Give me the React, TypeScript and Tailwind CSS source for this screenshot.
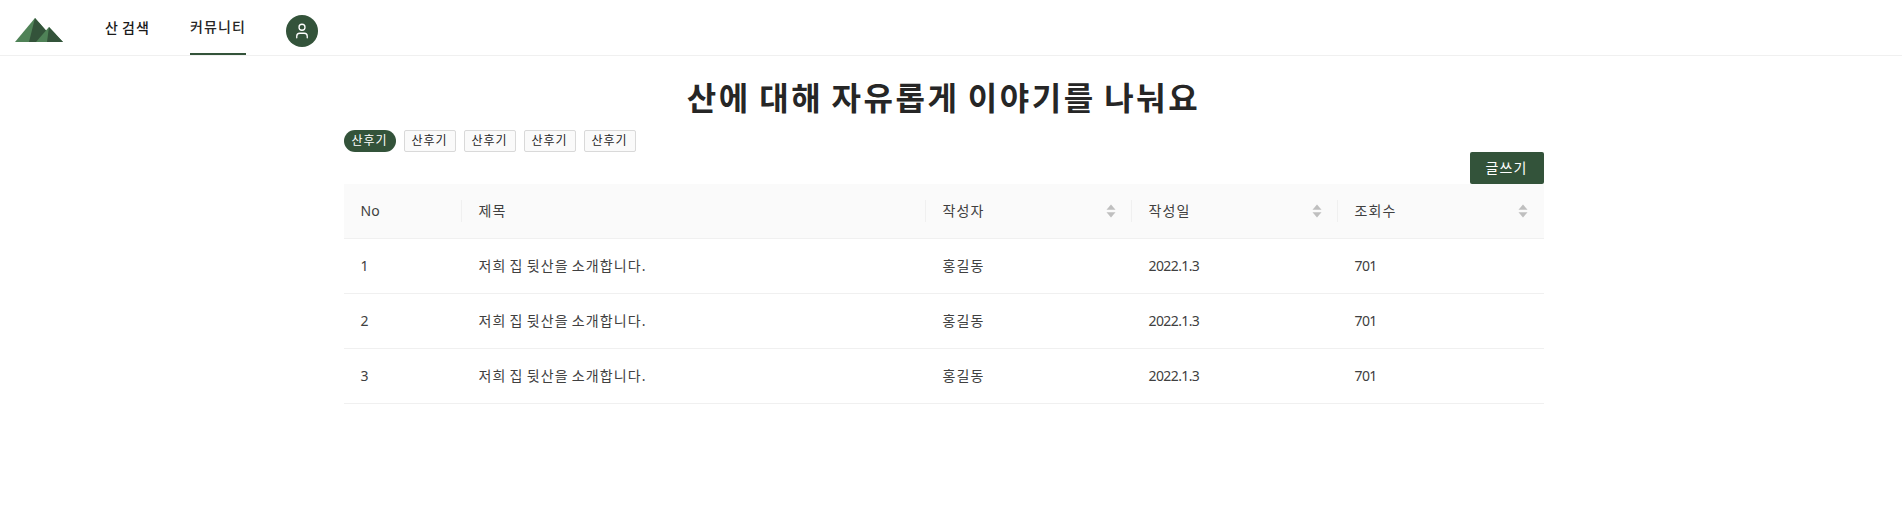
import { User } from "lucide-react";

const FONT = "font-['Noto_Sans','Noto_Sans_CJK_KR',sans-serif]";
// hangul in the reference runs at a full em, the installed CJK face is narrower
const HANGUL = "tracking-[0.08em] [word-spacing:-0.12em]";
const NUM = "tracking-[-0.6px]";
const TAGS = ["산후기", "산후기", "산후기", "산후기", "산후기"];
const ROWS = [1, 2, 3];
const COLS = "grid grid-cols-[118px_464px_206px_206px_206px]";

function SortIcon() {
  return (
    <svg width="10" height="14" viewBox="0 0 10 14" className="fill-[#bfbfbf]">
      <path d="M5 0.5 L9.5 5.8 H0.5 Z" />
      <path d="M5 13.5 L9.5 8.2 H0.5 Z" />
    </svg>
  );
}

function Logo() {
  return (
    <svg width="50" height="26" viewBox="0 0 50 26" className="mt-[5px]">
      <path d="M21 1 L36 18 L27 25 H1 Z" fill="#4f8257" />
      <path d="M21 1 L36 18 L28 25 H15 Z" fill="#33533a" />
      <path d="M35 10 L49 25 H22 Z" fill="#4f8257" />
      <path d="M35 10 L49 25 H33 Z" fill="#33533a" />
    </svg>
  );
}

function HeaderCell({ label, sortable, last }: { label: string; sortable?: boolean; last?: boolean }) {
  return (
    <div className="relative flex items-center justify-between px-4 pl-[17px]">
      <span className={label === "No" ? "" : HANGUL}>{label}</span>
      {sortable && <SortIcon />}
      {!last && <div className="absolute right-0 top-1/2 h-[22px] w-px -translate-y-1/2 bg-[#f0f0f0]" />}
    </div>
  );
}

export default function App() {
  return (
    <div className={`${FONT} min-h-[507px] bg-white text-[#262626]`}>
      <header className="flex h-[56px] items-center border-b border-[#f0f0f0] pl-[14px]">
        <Logo />
        <nav className={`ml-[41px] flex h-full items-center text-sm font-medium ${HANGUL}`}>
          <a className="pt-[1px] text-[#1a1a1a]">산 검색</a>
          <a className="ml-[40px] flex h-full items-center border-b-2 border-[#33533a] pt-[1px]">커뮤니티</a>
        </nav>
        <div className="mt-[6px] ml-[40px] flex size-8 items-center justify-center rounded-full bg-[#33533a] text-white">
          <User size={18} strokeWidth={1.75} />
        </div>
      </header>

      <main className="w-[1887px]">
        <div className="mx-auto w-[1200px]">
          <h1 className="mt-[20px] h-[54px] text-center text-[32px] leading-[44px] font-semibold tracking-[0.08em] [word-spacing:-0.08em]">
            산에 대해 자유롭게 이야기를 나눠요
          </h1>
          <div className="flex gap-2">
            {TAGS.map((t, i) => (
              <span
                key={i}
                className={
                  i === 0
                    ? `flex h-[22px] w-[52px] items-center justify-center rounded-full bg-[#33533a] text-xs text-white ${HANGUL}`
                    : `flex h-[22px] w-[52px] items-center justify-center rounded-[2px] border border-[#d9d9d9] bg-[#fafafa] text-xs ${HANGUL}`
                }
              >
                {t}
              </span>
            ))}
          </div>
          <div className="flex justify-end">
            <button className={`h-[32px] w-[74px] rounded-[2px] bg-[#33533a] text-sm text-white ${HANGUL}`}>글쓰기</button>
          </div>
          <div className="text-sm text-[#404040]">
            <div className={`${COLS} h-[55px] border-b border-[#f0f0f0] bg-[#fafafa]`}>
              <HeaderCell label="No" />
              <HeaderCell label="제목" />
              <HeaderCell label="작성자" sortable />
              <HeaderCell label="작성일" sortable />
              <HeaderCell label="조회수" sortable last />
            </div>
            {ROWS.map((n) => (
              <div key={n} className={`${COLS} h-[55px] items-center border-b border-[#f0f0f0]`}>
                <div className={`pl-[17px] ${NUM}`}>{n}</div>
                <div className={`pl-[17px] ${HANGUL}`}>저희 집 뒷산을 소개합니다.</div>
                <div className={`pl-[17px] ${HANGUL}`}>홍길동</div>
                <div className={`pl-[17px] ${NUM}`}>2022.1.3</div>
                <div className={`pl-[17px] ${NUM}`}>701</div>
              </div>
            ))}
          </div>
        </div>
      </main>
    </div>
  );
}
